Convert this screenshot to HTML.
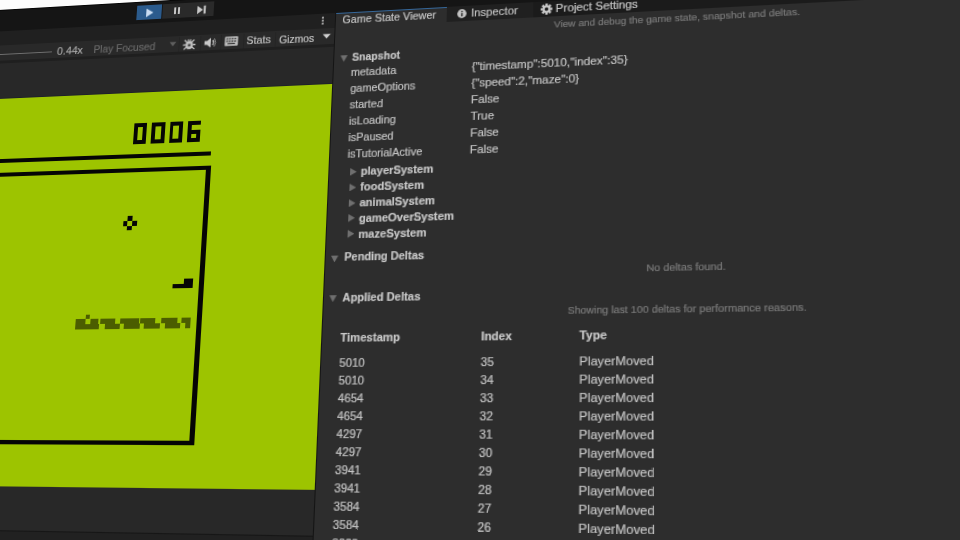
<!DOCTYPE html>
<html><head><meta charset="utf-8"><style>
html,body{margin:0;padding:0;width:960px;height:540px;overflow:hidden;background:#fdfdfd;}
#st{position:absolute;left:0;top:0;width:1px;height:1px;transform-origin:0 0;transform:matrix3d(0.918298654,-0.0545157358,0,-0.000133266057,-0.0887477177,0.940527728,0,-0.000143751102,0,0,1,0,30.0079058,6.28261295,0,1);}
#st div,#st svg{position:absolute;}
#st .t{white-space:nowrap;line-height:1;font-family:"Liberation Sans",sans-serif;-webkit-text-stroke:0.18px currentColor;}
</style></head><body>
<div id="wr" style="position:absolute;left:0;top:0;width:960px;height:540px;overflow:hidden;"><div id="st">
<div style="left:-400.00px;top:2.20px;width:1800.00px;height:897.80px;background:#151515;"></div>
<div style="left:-400.00px;top:2.20px;width:1800.00px;height:1.00px;background:#060606;"></div>
<div style="left:115.20px;top:5.70px;width:26.10px;height:15.30px;background:#2b5b8d;"></div>
<div style="left:141.80px;top:5.70px;width:27.00px;height:15.30px;background:#2a2a2a;"></div>
<div style="left:169.30px;top:5.70px;width:26.10px;height:15.30px;background:#2a2a2a;"></div>
<svg style="left:124px;top:9px" width="10" height="10" viewBox="0 0 10 10"><path d="M1 0.5 L8.5 5 L1 9.5Z" fill="#c9dcf2"/></svg>
<div style="left:153.60px;top:9.60px;width:2.20px;height:7.80px;background:#c8c8c8;"></div>
<div style="left:157.60px;top:9.60px;width:2.20px;height:7.80px;background:#c8c8c8;"></div>
<svg style="left:177px;top:8.8px" width="12" height="10" viewBox="0 0 12 10"><path d="M1 0.8 L7 5 L1 9.2Z" fill="#c8c8c8"/><rect x="7.6" y="0.8" width="2.1" height="8.4" fill="#c8c8c8"/></svg>
<div style="left:-400.00px;top:24.50px;width:1800.00px;height:15.50px;background:#202020;"></div>
<div style="left:508.80px;top:24.50px;width:891.20px;height:15.50px;background:#1b1b1b;"></div>
<div style="left:305.3px;top:27.55px;width:2.1px;height:2.1px;border-radius:50%;background:#c8c8c8"></div>
<div style="left:305.3px;top:30.95px;width:2.1px;height:2.1px;border-radius:50%;background:#c8c8c8"></div>
<div style="left:305.3px;top:34.35px;width:2.1px;height:2.1px;border-radius:50%;background:#c8c8c8"></div>
<div style="left:-400.00px;top:40.00px;width:717.80px;height:15.70px;background:#292929;"></div>
<div style="left:-400.00px;top:55.70px;width:717.80px;height:2.90px;background:#1f1f1f;"></div>
<div style="left:-400.00px;top:49.30px;width:428.00px;height:1.20px;background:#6f6f6f;"></div>
<div class="t" style="left:33.60px;top:43.92px;font-size:11.2px;color:#a8a8a8;">0.44x</div>
<div class="t" style="left:72.20px;top:44.34px;font-size:10.7px;color:#6a6a6a;">Play Focused</div>
<svg style="left:150.6px;top:44.6px" width="8" height="6" viewBox="0 0 8 6"><path d="M0.5 0.8 L7.5 0.8 L4 5.2Z" fill="#5e5e5e"/></svg>
<svg style="left:164.8px;top:42.6px" width="14" height="12" viewBox="0 0 14 12"><g stroke="#c2c2c2" stroke-width="1.4" fill="none"><path d="M2 1.5 L4.5 3.8 M12 1.5 L9.5 3.8 M0.6 6.5 L3.4 6.5 M13.4 6.5 L10.6 6.5 M1.5 11 L4.2 9 M12.5 11 L9.8 9 M5.5 1 L6.3 2.5 M8.5 1 L7.7 2.5"/></g><ellipse cx="7" cy="6.8" rx="3.8" ry="4.2" fill="#c2c2c2"/><rect x="5.6" y="5.6" width="2.8" height="2.6" fill="#4a4a4a"/></svg>
<svg style="left:187.4px;top:42.6px" width="13" height="11" viewBox="0 0 13 11"><path d="M0.6 3.6 L3.2 3.6 L7 0.6 L7 10.4 L3.2 7.4 L0.6 7.4Z" fill="#c8c8c8"/><path d="M9 3 Q10.6 5.5 9 8" stroke="#c8c8c8" stroke-width="1.4" fill="none"/><path d="M10.6 1.4 Q13 5.5 10.6 9.6" stroke="#9a9a9a" stroke-width="1" fill="none"/></svg>
<svg style="left:208.4px;top:43.2px" width="14" height="10" viewBox="0 0 14 10"><rect x="0.3" y="0.3" width="13.4" height="9.4" rx="0.8" fill="#bdbdbd"/><g fill="#3c3c3c"><rect x="1.8" y="1.8" width="1.7" height="1.5"/><rect x="4.5" y="1.8" width="1.7" height="1.5"/><rect x="7.2" y="1.8" width="1.7" height="1.5"/><rect x="9.9" y="1.8" width="1.7" height="1.5"/><rect x="1.8" y="4.3" width="1.7" height="1.5"/><rect x="4.5" y="4.3" width="1.7" height="1.5"/><rect x="7.2" y="4.3" width="1.7" height="1.5"/><rect x="9.9" y="4.3" width="1.7" height="1.5"/><rect x="3.2" y="6.8" width="7.6" height="1.3"/></g></svg>
<div style="left:161.00px;top:40.50px;width:0.90px;height:15.00px;background:#242424;"></div>
<div style="left:183.00px;top:40.50px;width:0.90px;height:15.00px;background:#242424;"></div>
<div style="left:204.00px;top:40.50px;width:0.90px;height:15.00px;background:#242424;"></div>
<div style="left:226.50px;top:40.50px;width:0.90px;height:15.00px;background:#242424;"></div>
<div style="left:259.00px;top:40.50px;width:0.90px;height:15.00px;background:#242424;"></div>
<div class="t" style="left:230.30px;top:42.96px;font-size:10.8px;color:#c0c0c0;">Stats</div>
<div class="t" style="left:263.20px;top:44.58px;font-size:10.3px;color:#c4c4c4;">Gizmos</div>
<svg style="left:305.5px;top:45px" width="9" height="6" viewBox="0 0 9 6"><path d="M0.5 0.8 L8.5 0.8 L4.5 5.2Z" fill="#d0d0d0"/></svg>
<div style="left:-400.00px;top:58.60px;width:717.80px;height:841.40px;background:#282828;"></div>
<div style="left:-400.00px;top:96.00px;width:717.80px;height:378.50px;background:#9dc400;"></div>
<div style="left:-400.00px;top:94.60px;width:717.80px;height:1.40px;background:#1e2128;"></div>
<div style="left:-400.00px;top:514.50px;width:717.80px;height:1.50px;background:#161616;"></div>
<div style="left:-400.00px;top:516.00px;width:717.80px;height:384.00px;background:#212121;"></div>
<div style="left:120.90px;top:127.30px;width:13.40px;height:3.90px;background:#050505;"></div>
<div style="left:120.90px;top:144.10px;width:13.40px;height:3.90px;background:#050505;"></div>
<div style="left:120.90px;top:127.30px;width:3.90px;height:20.70px;background:#050505;"></div>
<div style="left:130.40px;top:127.30px;width:3.90px;height:20.70px;background:#050505;"></div>
<div style="left:139.25px;top:127.30px;width:13.40px;height:3.90px;background:#050505;"></div>
<div style="left:139.25px;top:144.10px;width:13.40px;height:3.90px;background:#050505;"></div>
<div style="left:139.25px;top:127.30px;width:3.90px;height:20.70px;background:#050505;"></div>
<div style="left:148.75px;top:127.30px;width:3.90px;height:20.70px;background:#050505;"></div>
<div style="left:157.60px;top:127.30px;width:13.40px;height:3.90px;background:#050505;"></div>
<div style="left:157.60px;top:144.10px;width:13.40px;height:3.90px;background:#050505;"></div>
<div style="left:157.60px;top:127.30px;width:3.90px;height:20.70px;background:#050505;"></div>
<div style="left:167.10px;top:127.30px;width:3.90px;height:20.70px;background:#050505;"></div>
<div style="left:175.95px;top:127.30px;width:13.40px;height:3.90px;background:#050505;"></div>
<div style="left:175.95px;top:144.10px;width:13.40px;height:3.90px;background:#050505;"></div>
<div style="left:175.95px;top:127.30px;width:3.90px;height:20.70px;background:#050505;"></div>
<div style="left:175.95px;top:135.70px;width:13.40px;height:3.90px;background:#050505;"></div>
<div style="left:185.45px;top:135.70px;width:3.90px;height:12.30px;background:#050505;"></div>
<div style="left:-400.00px;top:158.20px;width:601.40px;height:3.40px;background:#050505;"></div>
<div style="left:-400.00px;top:172.20px;width:601.80px;height:4.20px;background:#050505;"></div>
<div style="left:197.00px;top:172.20px;width:4.80px;height:264.20px;background:#050505;"></div>
<div style="left:-400.00px;top:431.90px;width:601.80px;height:4.50px;background:#050505;"></div>
<div style="left:121.40px;top:219.40px;width:4.95px;height:4.60px;background:#050505;"></div>
<div style="left:116.50px;top:224.00px;width:4.95px;height:4.60px;background:#050505;"></div>
<div style="left:126.40px;top:224.00px;width:4.95px;height:4.60px;background:#050505;"></div>
<div style="left:121.40px;top:228.70px;width:4.95px;height:4.60px;background:#050505;"></div>
<div style="left:181.80px;top:280.60px;width:9.60px;height:5.60px;background:#050505;"></div>
<div style="left:171.30px;top:286.00px;width:20.10px;height:4.30px;background:#050505;"></div>
<div style="left:86.40px;top:314.20px;width:4.10px;height:4.20px;background:#4b5d00;"></div>
<div style="left:75.60px;top:318.30px;width:10.80px;height:5.10px;background:#4b5d00;"></div>
<div style="left:90.50px;top:318.30px;width:8.10px;height:5.10px;background:#4b5d00;"></div>
<div style="left:101.40px;top:318.30px;width:15.00px;height:5.10px;background:#4b5d00;"></div>
<div style="left:121.30px;top:318.30px;width:18.50px;height:5.10px;background:#4b5d00;"></div>
<div style="left:141.30px;top:318.30px;width:14.90px;height:5.10px;background:#4b5d00;"></div>
<div style="left:161.60px;top:318.30px;width:16.40px;height:5.10px;background:#4b5d00;"></div>
<div style="left:182.40px;top:318.30px;width:8.60px;height:5.10px;background:#4b5d00;"></div>
<div style="left:76.00px;top:323.30px;width:23.80px;height:4.60px;background:#4b5d00;"></div>
<div style="left:105.50px;top:323.30px;width:15.20px;height:4.60px;background:#4b5d00;"></div>
<div style="left:125.00px;top:323.30px;width:15.50px;height:4.60px;background:#4b5d00;"></div>
<div style="left:145.00px;top:323.30px;width:15.60px;height:4.60px;background:#4b5d00;"></div>
<div style="left:166.00px;top:323.30px;width:14.80px;height:4.60px;background:#4b5d00;"></div>
<div style="left:186.20px;top:323.30px;width:4.80px;height:4.60px;background:#4b5d00;"></div>
<div style="left:317.80px;top:40.00px;width:1.60px;height:860.00px;background:#141414;"></div>
<div style="left:319.40px;top:40.00px;width:1080.60px;height:860.00px;background:#2d2d2d;"></div>
<div style="left:318.40px;top:24.60px;width:109.10px;height:15.40px;background:#2d2d2d;"></div>
<div style="left:318.40px;top:24.50px;width:109.10px;height:0.90px;background:#35679a;"></div>
<div style="left:317.60px;top:24.50px;width:0.90px;height:15.50px;background:#141414;"></div>
<div class="t" style="left:325.60px;top:27.27px;font-size:10.55px;color:#c6c6c6;">Game State Viewer</div>
<svg style="left:436.5px;top:28px" width="9" height="9" viewBox="0 0 9 9"><circle cx="4.5" cy="4.5" r="4.4" fill="#c4c4c4"/><rect x="3.9" y="3.8" width="1.3" height="3.4" fill="#1d1d1d"/><rect x="3.9" y="1.8" width="1.3" height="1.2" fill="#1d1d1d"/></svg>
<div class="t" style="left:450.20px;top:26.86px;font-size:10.8px;color:#c0c0c0;">Inspector</div>
<svg style="left:516px;top:27.2px" width="11" height="11" viewBox="0 0 11 11"><g fill="#c8c8c8"><circle cx="5.5" cy="5.5" r="3.8"/><rect x="4.4" y="0" width="2.2" height="11"/><rect x="0" y="4.4" width="11" height="2.2"/><rect x="4.4" y="0" width="2.2" height="11" transform="rotate(45 5.5 5.5)"/><rect x="4.4" y="0" width="2.2" height="11" transform="rotate(-45 5.5 5.5)"/></g><circle cx="5.5" cy="5.5" r="1.7" fill="#1d1d1d"/></svg>
<div class="t" style="left:530.10px;top:27.26px;font-size:10.8px;color:#c8c8c8;">Project Settings</div>
<div class="t" style="left:528.60px;top:43.73px;font-size:9.3px;color:#7a7a7a;">View and debug the game state, snapshot and deltas.</div>
<svg style="left:324.90px;top:68.40px" width="7.0" height="6.4" viewBox="0 0 7.0 6.4"><path d="M0 0 L7.0 0 L3.5 6.4Z" fill="#6f6f6f"/></svg>
<div class="t" style="left:336.40px;top:65.82px;font-size:10.25px;color:#c8c8c8;font-weight:bold;">Snapshot</div>
<div class="t" style="left:335.90px;top:79.87px;font-size:10.6px;color:#c4c4c4;">metadata</div>
<div class="t" style="left:452.00px;top:79.61px;font-size:10.9px;color:#c4c4c4;">{"timestamp":5010,"index":35}</div>
<div class="t" style="left:335.90px;top:95.87px;font-size:10.6px;color:#c4c4c4;">gameOptions</div>
<div class="t" style="left:452.00px;top:95.61px;font-size:10.9px;color:#c4c4c4;">{"speed":2,"maze":0}</div>
<div class="t" style="left:335.90px;top:111.87px;font-size:10.6px;color:#c4c4c4;">started</div>
<div class="t" style="left:452.00px;top:111.61px;font-size:10.9px;color:#c4c4c4;">False</div>
<div class="t" style="left:335.90px;top:127.87px;font-size:10.6px;color:#c4c4c4;">isLoading</div>
<div class="t" style="left:452.00px;top:127.61px;font-size:10.9px;color:#c4c4c4;">True</div>
<div class="t" style="left:335.90px;top:143.87px;font-size:10.6px;color:#c4c4c4;">isPaused</div>
<div class="t" style="left:452.00px;top:143.61px;font-size:10.9px;color:#c4c4c4;">False</div>
<div class="t" style="left:335.90px;top:159.87px;font-size:10.6px;color:#c4c4c4;">isTutorialActive</div>
<div class="t" style="left:452.00px;top:159.61px;font-size:10.9px;color:#c4c4c4;">False</div>
<svg style="left:339.00px;top:178.85px" width="6.4" height="7.4" viewBox="0 0 6.4 7.4"><path d="M0 0 L6.4 3.7 L0 7.4Z" fill="#6f6f6f"/></svg>
<div class="t" style="left:349.20px;top:177.48px;font-size:10.6px;color:#c8c8c8;font-weight:bold;">playerSystem</div>
<svg style="left:339.00px;top:193.69px" width="6.4" height="7.4" viewBox="0 0 6.4 7.4"><path d="M0 0 L6.4 3.7 L0 7.4Z" fill="#6f6f6f"/></svg>
<div class="t" style="left:349.20px;top:192.32px;font-size:10.6px;color:#c8c8c8;font-weight:bold;">foodSystem</div>
<svg style="left:339.00px;top:208.53px" width="6.4" height="7.4" viewBox="0 0 6.4 7.4"><path d="M0 0 L6.4 3.7 L0 7.4Z" fill="#6f6f6f"/></svg>
<div class="t" style="left:349.20px;top:207.16px;font-size:10.6px;color:#c8c8c8;font-weight:bold;">animalSystem</div>
<svg style="left:339.00px;top:223.37px" width="6.4" height="7.4" viewBox="0 0 6.4 7.4"><path d="M0 0 L6.4 3.7 L0 7.4Z" fill="#6f6f6f"/></svg>
<div class="t" style="left:349.20px;top:222.00px;font-size:10.6px;color:#c8c8c8;font-weight:bold;">gameOverSystem</div>
<svg style="left:339.00px;top:238.21px" width="6.4" height="7.4" viewBox="0 0 6.4 7.4"><path d="M0 0 L6.4 3.7 L0 7.4Z" fill="#6f6f6f"/></svg>
<div class="t" style="left:349.20px;top:236.84px;font-size:10.6px;color:#c8c8c8;font-weight:bold;">mazeSystem</div>
<svg style="left:324.30px;top:261.60px" width="7.0" height="6.4" viewBox="0 0 7.0 6.4"><path d="M0 0 L7.0 0 L3.5 6.4Z" fill="#6f6f6f"/></svg>
<div class="t" style="left:336.70px;top:258.80px;font-size:10.4px;color:#c8c8c8;font-weight:bold;">Pending Deltas</div>
<div class="t" style="left:612.50px;top:274.20px;font-size:9.45px;color:#7a7a7a;">No deltas found.</div>
<svg style="left:324.40px;top:298.50px" width="7.0" height="6.4" viewBox="0 0 7.0 6.4"><path d="M0 0 L7.0 0 L3.5 6.4Z" fill="#6f6f6f"/></svg>
<div class="t" style="left:336.60px;top:295.81px;font-size:10.5px;color:#c8c8c8;font-weight:bold;">Applied Deltas</div>
<div class="t" style="left:543.20px;top:312.38px;font-size:9.36px;color:#7a7a7a;">Showing last 100 deltas for performance reasons.</div>
<div class="t" style="left:336.00px;top:333.03px;font-size:10.6px;color:#c8c8c8;font-weight:bold;">Timestamp</div>
<div class="t" style="left:465.95px;top:333.43px;font-size:10.6px;color:#c8c8c8;font-weight:bold;">Index</div>
<div class="t" style="left:553.84px;top:332.93px;font-size:10.6px;color:#c8c8c8;font-weight:bold;">Type</div>
<div class="t" style="left:336.00px;top:355.94px;font-size:10.7px;color:#c4c4c4;">5010</div>
<div class="t" style="left:465.95px;top:355.94px;font-size:10.7px;color:#c4c4c4;">35</div>
<div class="t" style="left:553.84px;top:356.20px;font-size:11.1px;color:#c4c4c4;">PlayerMoved</div>
<div class="t" style="left:336.00px;top:371.94px;font-size:10.7px;color:#c4c4c4;">5010</div>
<div class="t" style="left:465.95px;top:371.94px;font-size:10.7px;color:#c4c4c4;">34</div>
<div class="t" style="left:553.84px;top:372.20px;font-size:11.1px;color:#c4c4c4;">PlayerMoved</div>
<div class="t" style="left:336.00px;top:387.94px;font-size:10.7px;color:#c4c4c4;">4654</div>
<div class="t" style="left:465.95px;top:387.94px;font-size:10.7px;color:#c4c4c4;">33</div>
<div class="t" style="left:553.84px;top:388.20px;font-size:11.1px;color:#c4c4c4;">PlayerMoved</div>
<div class="t" style="left:336.00px;top:403.94px;font-size:10.7px;color:#c4c4c4;">4654</div>
<div class="t" style="left:465.95px;top:403.94px;font-size:10.7px;color:#c4c4c4;">32</div>
<div class="t" style="left:553.84px;top:404.20px;font-size:11.1px;color:#c4c4c4;">PlayerMoved</div>
<div class="t" style="left:336.00px;top:419.94px;font-size:10.7px;color:#c4c4c4;">4297</div>
<div class="t" style="left:465.95px;top:419.94px;font-size:10.7px;color:#c4c4c4;">31</div>
<div class="t" style="left:553.84px;top:420.20px;font-size:11.1px;color:#c4c4c4;">PlayerMoved</div>
<div class="t" style="left:336.00px;top:435.94px;font-size:10.7px;color:#c4c4c4;">4297</div>
<div class="t" style="left:465.95px;top:435.94px;font-size:10.7px;color:#c4c4c4;">30</div>
<div class="t" style="left:553.84px;top:436.20px;font-size:11.1px;color:#c4c4c4;">PlayerMoved</div>
<div class="t" style="left:336.00px;top:451.94px;font-size:10.7px;color:#c4c4c4;">3941</div>
<div class="t" style="left:465.95px;top:451.94px;font-size:10.7px;color:#c4c4c4;">29</div>
<div class="t" style="left:553.84px;top:452.20px;font-size:11.1px;color:#c4c4c4;">PlayerMoved</div>
<div class="t" style="left:336.00px;top:467.94px;font-size:10.7px;color:#c4c4c4;">3941</div>
<div class="t" style="left:465.95px;top:467.94px;font-size:10.7px;color:#c4c4c4;">28</div>
<div class="t" style="left:553.84px;top:468.20px;font-size:11.1px;color:#c4c4c4;">PlayerMoved</div>
<div class="t" style="left:336.00px;top:483.94px;font-size:10.7px;color:#c4c4c4;">3584</div>
<div class="t" style="left:465.95px;top:483.94px;font-size:10.7px;color:#c4c4c4;">27</div>
<div class="t" style="left:553.84px;top:484.20px;font-size:11.1px;color:#c4c4c4;">PlayerMoved</div>
<div class="t" style="left:336.00px;top:499.94px;font-size:10.7px;color:#c4c4c4;">3584</div>
<div class="t" style="left:465.95px;top:499.94px;font-size:10.7px;color:#c4c4c4;">26</div>
<div class="t" style="left:553.84px;top:500.20px;font-size:11.1px;color:#c4c4c4;">PlayerMoved</div>
<div class="t" style="left:336.00px;top:515.94px;font-size:10.7px;color:#c4c4c4;">3228</div>
<div class="t" style="left:465.95px;top:515.94px;font-size:10.7px;color:#c4c4c4;">25</div>
<div class="t" style="left:553.84px;top:516.20px;font-size:11.1px;color:#c4c4c4;">PlayerMoved</div>
</div></div>
</body></html>
